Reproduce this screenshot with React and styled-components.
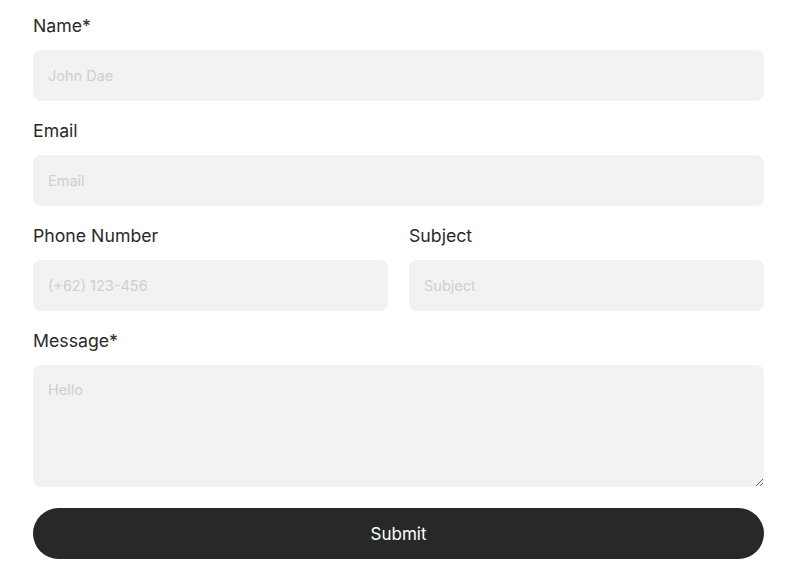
import styled, { createGlobalStyle } from "styled-components";

const Global = createGlobalStyle`
  body {
    margin: 0;
    background: #fff;
    font-family: Inter, "Noto Sans", sans-serif;
  }
`;

const Form = styled.form`
  width: 731px;
  padding: 13px 0 0 33px;
  display: flex;
  flex-direction: column;
  gap: 17px;
`;

const Row = styled.div`
  display: grid;
  grid-template-columns: 1fr 1fr;
  gap: 21px;
`;

const Field = styled.div`
  display: flex;
  flex-direction: column;
  gap: 11px;
`;

const Label = styled.label`
  font-size: 17.7px;
  line-height: 26px;
  color: #2a2a2a;
`;

const Input = styled.input`
  box-sizing: border-box;
  height: 51px;
  border: none;
  border-radius: 8px;
  background: #f2f2f2;
  padding: 0 15px;
  font-family: inherit;
  font-size: 14.5px;
  color: #222;
  outline: none;
  &::placeholder { color: #cfcfcf; }
`;

const TextArea = styled.textarea`
  box-sizing: border-box;
  display: block;
  height: 122px;
  border: none;
  border-radius: 8px;
  background: #f2f2f2;
  padding: 16px 15px;
  font-family: inherit;
  font-size: 14.5px;
  color: #222;
  outline: none;
  resize: vertical;
  &::placeholder { color: #cfcfcf; }
`;

const Submit = styled.button`
  height: 51px;
  margin-top: 4px;
  border: none;
  border-radius: 26px;
  background: #282828;
  color: #fff;
  font-family: inherit;
  font-size: 17px;
  cursor: pointer;
`;

export default function App() {
  return (
    <>
      <Global />
      <Form onSubmit={(e) => e.preventDefault()}>
        <Field>
          <Label>Name*</Label>
          <Input placeholder="John Dae" />
        </Field>
        <Field>
          <Label>Email</Label>
          <Input placeholder="Email" />
        </Field>
        <Row>
          <Field>
            <Label>Phone Number</Label>
            <Input placeholder="(+62) 123-456" />
          </Field>
          <Field>
            <Label>Subject</Label>
            <Input placeholder="Subject" />
          </Field>
        </Row>
        <Field>
          <Label>Message*</Label>
          <TextArea placeholder="Hello" />
        </Field>
        <Submit type="submit">Submit</Submit>
      </Form>
    </>
  );
}
